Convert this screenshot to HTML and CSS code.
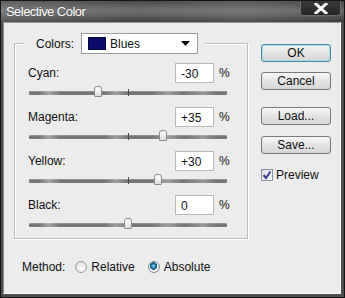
FILE: index.html
```html
<!DOCTYPE html>
<html>
<head>
<meta charset="utf-8">
<link rel="stylesheet" href="styles.css">
</head>
<body>
<div class="window">
  <div class="titlebar">
    <span class="title">Selective Color</span>
    <span class="close">
      <svg width="14" height="11" viewBox="0 0 14 11"><path d="M2 1 L12 10 M12 1 L2 10" stroke="#fff" stroke-width="3" stroke-linecap="square"/></svg>
    </span>
  </div>
  <div class="client">
    <div class="left">
      <div class="group">
        <div class="legend">
          <span class="legend-label">Colors:</span>
          <div class="select">
            <span class="swatch"></span>
            <span class="select-text">Blues</span>
            <svg class="arrow" width="9" height="5" viewBox="0 0 9 5"><path d="M0 0 H9 L4.5 5 Z" fill="#000"/></svg>
          </div>
        </div>
        <div class="row">
          <div class="row-head"><span class="label">Cyan:</span><span class="field">-30</span><span class="pct">%</span></div>
          <div class="slider"><div class="track"><span class="tick"></span><span class="thumb" style="left:69px"></span></div></div>
        </div>
        <div class="row">
          <div class="row-head"><span class="label">Magenta:</span><span class="field">+35</span><span class="pct">%</span></div>
          <div class="slider"><div class="track"><span class="tick"></span><span class="thumb" style="left:134px"></span></div></div>
        </div>
        <div class="row">
          <div class="row-head"><span class="label">Yellow:</span><span class="field">+30</span><span class="pct">%</span></div>
          <div class="slider"><div class="track"><span class="tick"></span><span class="thumb" style="left:129px"></span></div></div>
        </div>
        <div class="row last">
          <div class="row-head"><span class="label">Black:</span><span class="field">0</span><span class="pct">%</span></div>
          <div class="slider"><div class="track"><span class="tick"></span><span class="thumb" style="left:99px"></span></div></div>
        </div>
      </div>
      <div class="method">
        <span class="method-label">Method:</span>
        <span class="radio"></span><span class="radio-text">Relative</span>
        <span class="radio checked"></span><span class="radio-text">Absolute</span>
      </div>
    </div>
    <div class="right">
      <div class="btn default">OK</div>
      <div class="btn cancel">Cancel</div>
      <div class="btn load">Load...</div>
      <div class="btn save">Save...</div>
      <div class="preview">
        <span class="checkbox"><svg width="10" height="10" viewBox="0 0 10 10"><path d="M1.5 5 L4 8 L8.5 1.5" fill="none" stroke="#3b3f8c" stroke-width="2"/></svg></span>
        <span class="preview-text">Preview</span>
      </div>
    </div>
  </div>
</div>
</body>
</html>
```

FILE: styles.css
```css
html, body {
  margin: 0;
  padding: 0;
  background: #ececec;
}

body {
  font-family: "Liberation Sans", Arial, sans-serif;
  font-size: 12px;
  color: #111;
}

.window {
  width: 345px;
  height: 298px;
  box-sizing: border-box;
  border: 1px solid #151515;
  background: #4e4e4e;
  display: flex;
  flex-direction: column;
}

.titlebar {
  height: 21px;
  flex: none;
  display: flex;
  align-items: flex-start;
  justify-content: space-between;
  background:
    linear-gradient(to right, rgba(255,255,255,0.12), rgba(255,255,255,0) 40%, rgba(255,255,255,0.08) 70%, rgba(0,0,0,0.05)),
    linear-gradient(to bottom, #4a4a4a 0%, #6f6f6f 45%, #5c5c5c 70%, #3e3e3e 100%);
}

.title {
  color: #fff;
  font-size: 13px;
  letter-spacing: -0.55px;
  margin: 3px 0 0 5px;
  text-shadow: 0 0 2px rgba(0,0,0,0.4);
}

.close {
  width: 39px;
  height: 14px;
  margin: 0 3px 0 0;
  background: linear-gradient(#3a3a3a, #262626);
  border: 1px solid #6a6a6a;
  border-top: none;
  border-radius: 0 0 3px 3px;
  display: flex;
  align-items: center;
  justify-content: center;
}

.client {
  flex: 1;
  margin: 0 3px 3px 2px;
  background: #ececec;
  border-top: 1px solid #9a9a9a;
  border-left: 1px solid #8a8a8a;
  border-right: 1px solid #fafafa;
  border-bottom: 1px solid #fafafa;
  display: flex;
}

.left {
  display: flex;
  flex-direction: column;
}

.group {
  margin: 20px 0 0 10px;
  width: 234px;
  box-sizing: border-box;
  border: 1px solid #bdbdbd;
  box-shadow: inset 1px 1px 0 #fff, 1px 1px 0 #fff;
  padding: 0 17px 0 13px;
}

.legend {
  margin: -11px 0 0 -4px;
  width: 181px;
  height: 21px;
  background: #ececec;
  display: flex;
  align-items: center;
}

.legend-label {
  margin-left: 12px;
  width: 45px;
}

.select {
  width: 117px;
  height: 21px;
  box-sizing: border-box;
  border: 1px solid #9c9c9c;
  background: #fff;
  display: flex;
  align-items: center;
}

.swatch {
  width: 16px;
  height: 11px;
  margin-left: 6px;
  background: #0c0c68;
  border: 1px solid #08083a;
}

.select-text {
  margin-left: 4px;
  flex: 1;
}

.arrow {
  margin-right: 7px;
}

.row-head {
  margin-top: 9px;
  height: 20px;
  display: flex;
  align-items: center;
}

.row + .row .row-head {
  margin-top: 0;
}

.label {
  flex: 1;
}

.field {
  width: 39px;
  height: 20px;
  box-sizing: border-box;
  border: 1px solid #b9b9b9;
  background: #fff;
  padding: 3px 0 0 5px;
  line-height: 14px;
}

.pct {
  margin-left: 5px;
  width: 11px;
}

.slider {
  height: 24px;
  box-sizing: border-box;
  padding-top: 8px;
}

.row.last .slider {
  height: 23px;
}

.track {
  position: relative;
  margin-left: 1px;
  width: 198px;
  height: 4px;
  background:
    linear-gradient(to right, rgba(255,255,255,0) 5%, rgba(255,255,255,0.35) 10%, rgba(255,255,255,0) 16%, rgba(255,255,255,0) 38%, rgba(255,255,255,0.3) 44%, rgba(255,255,255,0) 50%, rgba(255,255,255,0) 62%, rgba(255,255,255,0.3) 70%, rgba(255,255,255,0) 78%, rgba(255,255,255,0.25) 88%, rgba(255,255,255,0) 95%),
    linear-gradient(to bottom, #9a9a9a, #6c6c6c 50%, #7e7e7e);
  border-radius: 1px;
}

.tick {
  position: absolute;
  left: 99px;
  top: -2px;
  width: 1px;
  height: 7px;
  background: #4a4a4a;
}

.thumb {
  position: absolute;
  top: -5px;
  width: 8px;
  height: 11px;
  margin-left: -4px;
  box-sizing: border-box;
  border: 1px solid #8c8c8c;
  border-radius: 3px 3px 1px 1px;
  background: linear-gradient(#ffffff, #dedede);
}

.method {
  margin: 20px 0 0 18px;
  height: 16px;
  display: flex;
  align-items: center;
}

.method-label {
  margin-right: 10px;
}

.radio {
  width: 12px;
  height: 12px;
  box-sizing: border-box;
  border-radius: 50%;
  border: 1px solid #9a9a9a;
  background: radial-gradient(circle at 60% 65%, #ffffff, #d6d6d6);
  margin-right: 4px;
}

.radio.checked {
  margin-left: 13px;
  border-color: #7a8a9a;
  background: radial-gradient(circle at 45% 40%, #9fd6f0 0, #2a86b4 2px, #0d4e78 3.5px, #ffffff 4px, #e2e2e2 6px);
}

.right {
  margin: 21px 0 0 13px;
  display: flex;
  flex-direction: column;
}

.btn {
  width: 70px;
  height: 18px;
  box-sizing: border-box;
  border: 1px solid #7a7a7a;
  border-radius: 3px;
  background: linear-gradient(#f7f7f7, #e4e4e4 50%, #d6d6d6);
  display: flex;
  align-items: center;
  justify-content: center;
  color: #111;
}

.btn.default {
  border-color: #3f8f9c;
  box-shadow: inset 0 0 0 1px #a6dde6;
}

.btn.cancel {
  margin-top: 10px;
}

.btn.load {
  margin-top: 17px;
}

.btn.save {
  margin-top: 11px;
}

.preview {
  margin-top: 15px;
  display: flex;
  align-items: center;
  height: 12px;
}

.checkbox {
  width: 12px;
  height: 12px;
  box-sizing: border-box;
  border: 1px solid #8c91a6;
  background: linear-gradient(135deg, #dcdde4, #ffffff);
  display: flex;
  align-items: center;
  justify-content: center;
  margin-right: 3px;
}
```
